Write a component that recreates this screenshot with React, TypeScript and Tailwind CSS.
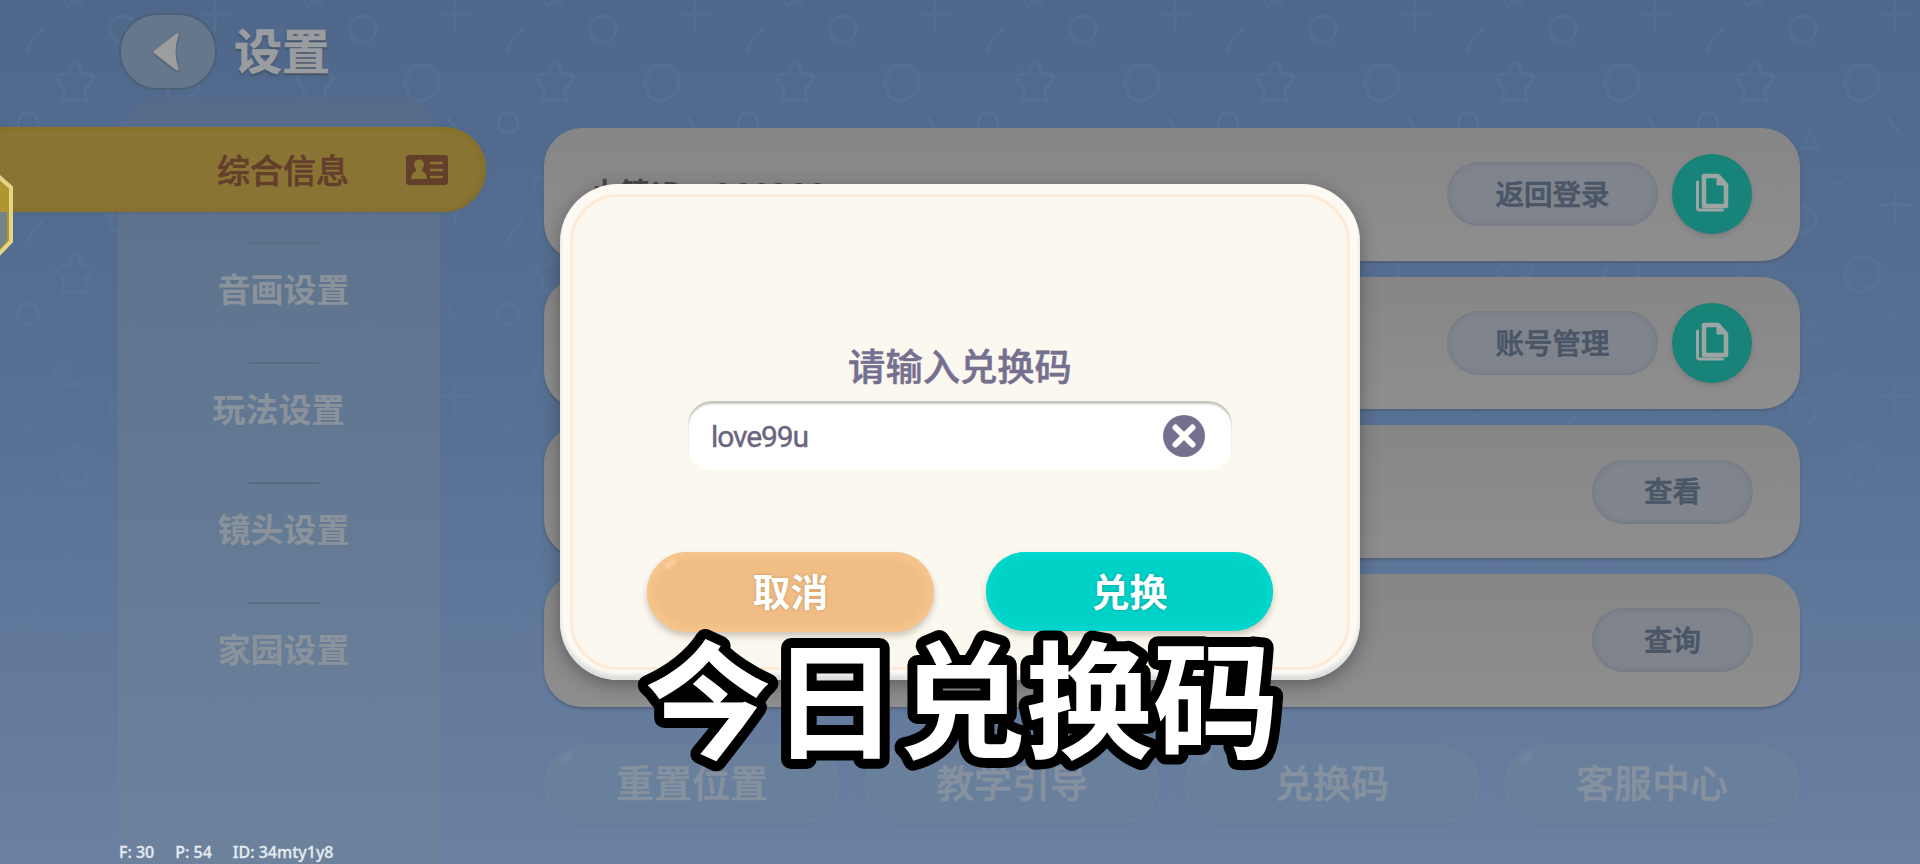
import type { ReactNode } from "react";

const SIDE_ITEMS = ["音画设置", "玩法设置", "镜头设置", "家园设置"];

interface Card {
  label?: string;
  action: string;
  copy: boolean;
}

const CARDS: Card[] = [
  { label: "小镇ID：266266", action: "返回登录", copy: true },
  { action: "账号管理", copy: true },
  { action: "查看", copy: false },
  { action: "查询", copy: false },
];

const FOOTER = ["重置位置", "教学引导", "兑换码", "客服中心"];

// Repeating doodles on the blue wallpaper
function Wallpaper() {
  return (
    <svg
      className="absolute inset-0 h-full w-full [mask-image:linear-gradient(to_bottom,black_0%,black_20%,rgba(0,0,0,0.3)_75%)]"
      fill="none"
    >
      <defs>
        <pattern id="doodles" width="240" height="191" patternUnits="userSpaceOnUse">
          <g stroke="#7393b4" strokeOpacity="0.14" strokeWidth="3.500" strokeLinecap="round" strokeLinejoin="round">
            <circle cx="123" cy="29" r="13" />
            <path d="M215 0v30M200 14h30" />
            <path d="M42 30l-9 9-6 11" />
            <path d="M75 63q4 0 6 10l11 3q3 2 0 5l-7 8 2 12-10-1h-4l-9 1q-2 0-2-3l2-10-7-8q-2-4 2-5l10-2q2-10 6-10z" />
            <path d="M172 66l17 0 10 8-1 18-18 10-10-5-6-14z" />
            <circle cx="28" cy="123" r="10" />
            <path d="M208 118l10 13" />
            <path d="M130 130l-8 18h18z" strokeOpacity="0.1" />
            <path d="M154 182l4 3 9-8" strokeOpacity="0.1" />
            <path d="M54 188c0-12 8-14 10-6s8 0 6-8" strokeOpacity="0.1" />
            <path d="M62 0c-2-8 8-12 10-4s8 8 12-2M64 0c4 8 8 8 8 0s4 8 8 4" />
          </g>
        </pattern>
      </defs>
      <rect width="100%" height="100%" fill="url(#doodles)" />
    </svg>
  );
}

function BackArrow() {
  return (
    <svg width="30" height="40" viewBox="0 0 30 40" className="mr-1 drop-shadow-[0_1px_1px_rgba(50,60,70,0.6)]">
      <path
        d="M4 20L26 3q-6 17 0 34z"
        fill="#9b9d9e"
        stroke="#9b9d9e"
        strokeWidth="3"
        strokeLinejoin="round"
      />
    </svg>
  );
}

function IdCard() {
  return (
    <svg width="42" height="30" viewBox="0 0 42 30">
      <rect width="42" height="30" rx="3" fill="#633f2b" />
      <circle cx="13" cy="9.500" r="5" fill="#8a7434" />
      <path d="M5 24q0-6 5-8l-1-5h8l-1 5q5 2 5 8z" fill="#8a7434" />
      <path d="M25 8h11M25 15h11M25 22h11" stroke="#8a7434" strokeWidth="2.500" strokeLinecap="round" />
    </svg>
  );
}

function CopyIcon() {
  return (
    <svg width="36" height="40" viewBox="0 0 36 40" fill="none" stroke="#9da5a3">
      <path d="M10 3h14l8 9v21H10z" strokeWidth="4.500" strokeLinejoin="round" />
      <path d="M23 3v9h9z" fill="#9da5a3" strokeWidth="1" />
      <path d="M3.500 9v26q0 2 2 2h23" strokeWidth="3" strokeLinecap="round" />
    </svg>
  );
}

function GreyPill({ wide, children }: { wide: boolean; children: ReactNode }) {
  return (
    <button
      className={`h-16 rounded-full bg-[#7f848d] pb-[2px] text-[28.5px] font-medium text-[#4a5666] shadow-[inset_0_0_5px_1px_rgba(105,110,116,0.55)] [-webkit-text-stroke:0.7px_#4a5666] ${
        wide ? "w-[211px]" : "-mr-px w-[161px]"
      }`}
    >
      {children}
    </button>
  );
}

function Sidebar() {
  return (
    <aside className="flex w-[544px] flex-col">
      <header className="flex h-[98px] items-center gap-[17px] pl-[119px] pt-[5px]">
        <button className="flex h-[77px] w-[98px] items-center justify-center rounded-[38px] border-2 border-[#4c6076] bg-[#65778a]">
          <BackArrow />
        </button>
        <h1 className="pb-[7px] text-[48px] font-bold leading-none text-[#9a9da0] [-webkit-text-stroke:0.6px_#9a9da0] [text-shadow:0_2px_2px_#3f4f61]">
          设置
        </h1>
      </header>
      <div className="relative flex-1">
        <div className="absolute inset-y-0 left-[118px] w-[322px] bg-linear-to-b from-[#566b8a] via-[#60758e] via-20% to-[#6c829c] opacity-90 [clip-path:polygon(26px_0,298px_0,322px_28px,322px_100%,0_100%,0_28px)]" />
        <nav className="relative flex flex-col pt-[29px]">
          <div className="flex h-[85px] w-[486px] items-center rounded-r-full bg-[#8a7434] pl-[217px] shadow-[inset_0_3px_3px_#8a7228,inset_-4px_-2px_4px_#83702f,0_1px_3px_#566a7a]">
            <span className="flex-1 text-[33px] font-medium leading-none text-[#633f2b] [-webkit-text-stroke:0.6px_#633f2b]">
              综合信息
            </span>
            <span className="mr-[38px]">
              <IdCard />
            </span>
          </div>
          {SIDE_ITEMS.map((item, i) => (
            <div key={item} className="flex h-[120px] w-[567px] flex-col items-center pt-[30px]">
              <span className="h-[2px] w-[72px] shrink-0 rounded-full bg-[#566c84]" />
              <span
                className={`mt-[28px] text-[33px] font-bold leading-none text-[#8a929b] ${
                  i === 1 ? "-ml-[10px]" : ""
                }`}
              >
                {item}
              </span>
            </div>
          ))}
        </nav>
      </div>
    </aside>
  );
}

function RedeemDialog() {
  return (
    <div className="absolute left-[560px] top-[184px] h-[496px] w-[800px] rounded-[58px] bg-[#fdfaf4] p-[10px] shadow-[inset_0_-5px_4px_#dddcdc,0_5px_18px_rgba(40,40,45,0.45)]">
      <div className="flex h-full flex-col items-center rounded-[48px] border-[3px] border-[#fdead7] bg-[#fbf8ef] pt-[148px]">
        <h2 className="text-[37.300px] font-medium leading-[40px] text-[#757090] [-webkit-text-stroke:0.5px_#757090]">
          请输入兑换码
        </h2>
        <div className="mt-[16px] flex h-[69px] w-[544px] shrink-0 items-center justify-between rounded-[24px] bg-white pl-[23px] pr-[27px] shadow-[inset_0_3px_2px_#c6c5c3]">
          <span className="pt-[3px] font-[Roboto,sans-serif] text-[30px] leading-none tracking-[-1.100px] text-[#6a667e] [-webkit-text-stroke:0.4px_#6a667e]">
            love99u
          </span>
          <svg width="42" height="42" viewBox="0 0 42 42">
            <circle cx="21" cy="21" r="21" fill="#757090" />
            <path d="M12.500 12.500l17 17M29.500 12.500l-17 17" stroke="#fff" strokeWidth="6" strokeLinecap="round" />
          </svg>
        </div>
        <div className="mt-[82px] flex gap-[52px]">
          <button className="relative h-[80px] w-[287px] rounded-full bg-[#f0bd85] pb-[5px] text-[38px] font-bold text-white shadow-[inset_0_0_8px_6px_#f6c58e,0_4px_6px_rgba(120,100,80,0.35)] [text-shadow:0_0_3px_#c08c55]">
            取消
            <span className="absolute left-[17px] top-[9px] h-[6px] w-[13px] -rotate-[35deg] rounded-full bg-[#f9cd9a] blur-[1px]" />
          </button>
          <button className="h-[79px] w-[287px] rounded-full bg-[#01d2c8] pb-[5px] text-[38px] font-bold text-white shadow-[inset_0_0_6px_4px_#04d8cd,0_4px_6px_rgba(120,100,80,0.35)] [text-shadow:0_0_3px_#0a978f]">
            兑换
          </button>
        </div>
      </div>
    </div>
  );
}

export default function App() {
  return (
    <div className="relative h-[864px] w-[1920px] overflow-hidden bg-linear-to-b from-[#4e678a] via-[#577194] to-[#6b80a2] font-['Noto_Sans_CJK_SC',sans-serif]">
      <Wallpaper />
      <div className="relative flex h-full">
        <Sidebar />
        <main className="flex w-[1256px] flex-col pt-[128px]">
          <div className="flex flex-col gap-[16px]">
            {CARDS.map((card) => (
              <section
                key={card.action}
                className="flex h-[132.700px] items-center justify-end gap-[14px] rounded-[38px] bg-linear-to-b from-[#868686] to-[#8e8e8f] pl-[46px] pr-[48px] shadow-[0_2px_3px_#4f6079]"
              >
                {card.label && (
                  <span className="flex-1 pb-[5px] text-[29px] font-bold tracking-[1.500px] text-[#45474b]">
                    {card.label}
                  </span>
                )}
                <GreyPill wide={card.copy}>{card.action}</GreyPill>
                {card.copy && (
                  <button className="flex size-20 items-center justify-center rounded-full bg-[#178379] pb-[2px] shadow-[0_2px_5px_#777]">
                    <CopyIcon />
                  </button>
                )}
              </section>
            ))}
          </div>
          <div className="mt-[38px] grid grid-cols-4 gap-[24px]">
            {FOOTER.map((label) => (
              <button
                key={label}
                className="relative h-[79px] rounded-full bg-[#6a809b]/85 pb-[7px] text-[38px] font-medium text-[#8691a0] shadow-[inset_0_0_4px_1px_rgba(112,137,164,0.35),0_1px_3px_#64799a] [-webkit-text-stroke:0.5px_#8691a0]"
              >
                {label}
                <span className="absolute left-[17px] top-[9px] h-[6px] w-[13px] -rotate-45 rounded-full bg-[#7087a2] blur-[1px]" />
              </button>
            ))}
          </div>
        </main>
      </div>

      {/* Floating badge tucked against the left edge */}
      <svg className="absolute left-0 top-[172px]" width="14" height="86" viewBox="0 0 14 86">
        <path d="M0 5L11 15V70L0 82z" fill="#b0962d" />
        <path d="M0 40h7v28l-7 9z" fill="#72838c" />
        <path d="M-2 4L11 15.500V69.500L-2 83" fill="none" stroke="#e5d487" strokeWidth="4" />
      </svg>

      <div className="absolute bottom-[2px] left-[119px] flex gap-[21px] font-['Noto_Sans',sans-serif] text-[16px] font-medium leading-[20px] text-[#e6eaf1] [-webkit-text-stroke:0.3px_#e6eaf1]">
        <span>F: 30</span>
        <span>P: 54</span>
        <span>ID: 34mty1y8</span>
      </div>

      <RedeemDialog />

      {/* Caption with a rounded black outline */}
      <svg className="absolute left-[560px] top-[580px]" width="800" height="260">
        <text
          x="402"
          y="169"
          textAnchor="middle"
          className="fill-white stroke-black text-[127px] font-bold [paint-order:stroke_fill] [stroke-linejoin:round] [stroke-width:20px]"
        >
          今日兑换码
        </text>
      </svg>
    </div>
  );
}
